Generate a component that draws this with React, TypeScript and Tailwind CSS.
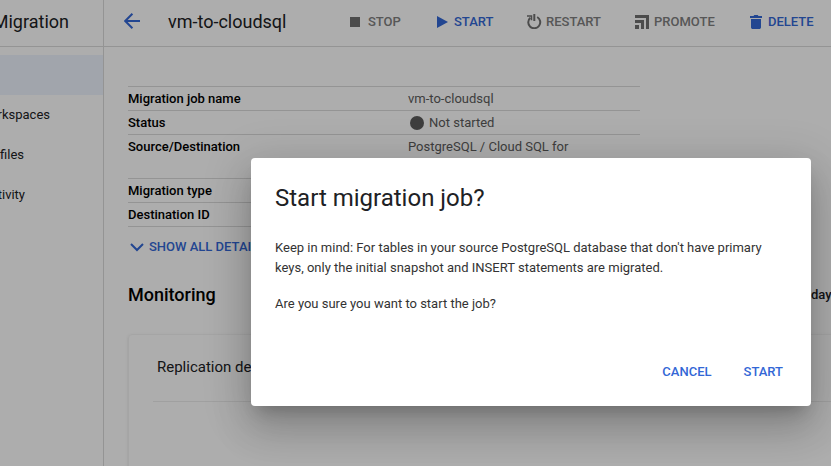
import type { ReactNode } from "react";

function Action({ label, color, className, children }: { label: string; color: string; className: string; children: ReactNode }) {
  return (
    <button className={`flex h-11 shrink-0 items-center whitespace-nowrap text-[13px] font-medium ${className}`}>
      {children}
      <span className={color}>{label}</span>
    </button>
  );
}

function Row({ label, children, tall = false }: { label: string; children?: ReactNode; tall?: boolean }) {
  return (
    <div className={`flex border-t border-[#dadada] leading-[23px] ${tall ? "h-11" : "h-6"}`}>
      <div className="w-[280px] font-medium text-black">{label}</div>
      <div className="flex items-start text-[#5c5c5c]">{children}</div>
    </div>
  );
}

function Sidebar() {
  return (
    <aside className="w-[104px] shrink-0 overflow-hidden border-r border-[#dadada] text-[13px] text-[#202124]">
      <div className="flex h-[47px] items-center justify-end border-b border-[#dadada] pr-[34px] pb-[3px] text-lg">Migration</div>
      <div className="mt-2 h-10 bg-[#eef3fe]" />
      <div className="flex h-10 items-center justify-end pr-[53px]">rkspaces</div>
      <div className="flex h-10 items-center justify-end pr-[79px]">files</div>
      <div className="flex h-10 items-center justify-end pr-[78px]">tivity</div>
    </aside>
  );
}

export default function App() {
  return (
    <div className="relative h-[466px] w-[831px] overflow-hidden bg-white font-[Roboto,sans-serif] text-[13px]">
      <div className="flex h-full">
        <Sidebar />
        <main className="min-w-0 flex-1 overflow-hidden">
          <header className="flex h-[47px] items-start border-b border-[#dadada]">
            <svg className="mt-[13px] ml-5 shrink-0" width="16" height="16" viewBox="0 0 16 16" fill="none" stroke="#3367d6" strokeWidth="2">
              <path d="M16 8H1.4M8.4.8 1.2 8l7.2 7.2" />
            </svg>
            <h1 className="ml-7 w-[181px] shrink-0 text-lg leading-[43px] text-[#202124]">vm-to-cloudsql</h1>
            <Action label="STOP" color="text-[#808080]" className="w-[88px] text-[#707070]">
              <svg className="mr-2 ml-[1px]" width="10" height="10" viewBox="0 0 10 10" fill="currentColor"><path d="M0 0h10v10H0z" /></svg>
            </Action>
            <Action label="START" color="text-[#3367d6]" className="w-[90px] text-[#3367d6]">
              <svg className="mr-[5px]" width="12" height="12" viewBox="0 0 12 12" fill="currentColor"><path d="M0 0v12l11-6z" /></svg>
            </Action>
            <Action label="RESTART" color="text-[#808080]" className="w-[108px] text-[#707070]">
              <svg className="mr-[4px] mb-[1px]" width="15" height="15" viewBox="0 0 15 15" fill="none" stroke="currentColor" strokeWidth="2">
                <path d="M10.2 3a6 6 0 1 1-6.9.7" />
                <path strokeWidth="1.5" d="M0 2h4.5v4.2" />
                <path d="M7.3 0v7" />
              </svg>
            </Action>
            <Action label="PROMOTE" color="text-[#808080]" className="w-[115px] text-[#707070]">
              <svg className="mr-[5px]" width="14" height="14" viewBox="0 0 14 14" fill="currentColor">
                <path d="M0 0h14v14h-3V3H0zM0 5h9v9H6V8H0zM0 10h4v4H0z" />
              </svg>
            </Action>
            <Action label="DELETE" color="text-[#3367d6]" className="text-[#3367d6]">
              <svg className="mr-1.5" width="12" height="14" viewBox="0 0 12 14" fill="currentColor">
                <path d="M0 1h3.5l.8-1h3.4l.8 1H12v2H0zM1 4h10v8.2c0 1-.8 1.8-1.8 1.8H2.8C1.8 14 1 13.2 1 12.2z" />
              </svg>
            </Action>
          </header>

          <div className="pt-[39px] pl-6">
            <section className="w-[512px] border-b border-[#dadada]">
              <Row label="Migration job name">vm-to-cloudsql</Row>
              <Row label="Status">
                <span className="mt-[5px] mr-[5px] ml-[2px] size-3.5 rounded-full bg-[#5c5c5c]" />Not started
              </Row>
              <Row label="Source/Destination" tall>PostgreSQL / Cloud SQL for</Row>
              <Row label="Migration type" />
              <Row label="Destination ID" />
            </section>
            <button className="mt-[10px] flex h-5 items-center font-medium text-[#3367d6]">
              <svg className="mr-[5px] ml-[2px]" width="14" height="9" viewBox="0 0 14 9" fill="none" stroke="currentColor" strokeWidth="2"><path d="m1 1 6 6 6-6" /></svg>
              SHOW ALL DETAILS
            </button>
            <div className="mt-[23px] flex h-[30px] items-center">
              <h2 className="w-[683px] shrink-0 text-lg font-medium text-black">Monitoring</h2>
              <span className="shrink-0 font-medium text-[#202124]">day</span>
            </div>
            <section className="mt-6 h-[150px] w-[760px] rounded border border-[#f4f4f4] pl-6 shadow-sm">
              <div className="flex h-[67px] items-center border-b border-[#ececec] pb-[1px] pl-1 text-[15px] text-[#202124]">Replication delay</div>
            </section>
          </div>
        </main>
      </div>

      <div className="absolute inset-0 bg-black/32" />
      <div role="dialog" className="absolute top-[158px] left-[251px] flex h-[248px] w-[560px] flex-col rounded bg-white p-6 text-[#333] shadow-[0_11px_15px_-7px_rgba(0,0,0,0.2),0_24px_38px_3px_rgba(0,0,0,0.14),0_9px_46px_8px_rgba(0,0,0,0.12)]">
        <h2 className="text-2xl leading-8 text-[#202124]">Start migration job?</h2>
        <p className="mt-6 leading-5">
          Keep in mind: For tables in your source PostgreSQL database that don't have primary<br />
          keys, only the initial snapshot and INSERT statements are migrated.
        </p>
        <p className="mt-4 leading-5">Are you sure you want to start the job?</p>
        <div className="mt-12 flex justify-end gap-8 pr-1 leading-5 font-medium text-[#3367d6]">
          <button>CANCEL</button>
          <button>START</button>
        </div>
      </div>
    </div>
  );
}
